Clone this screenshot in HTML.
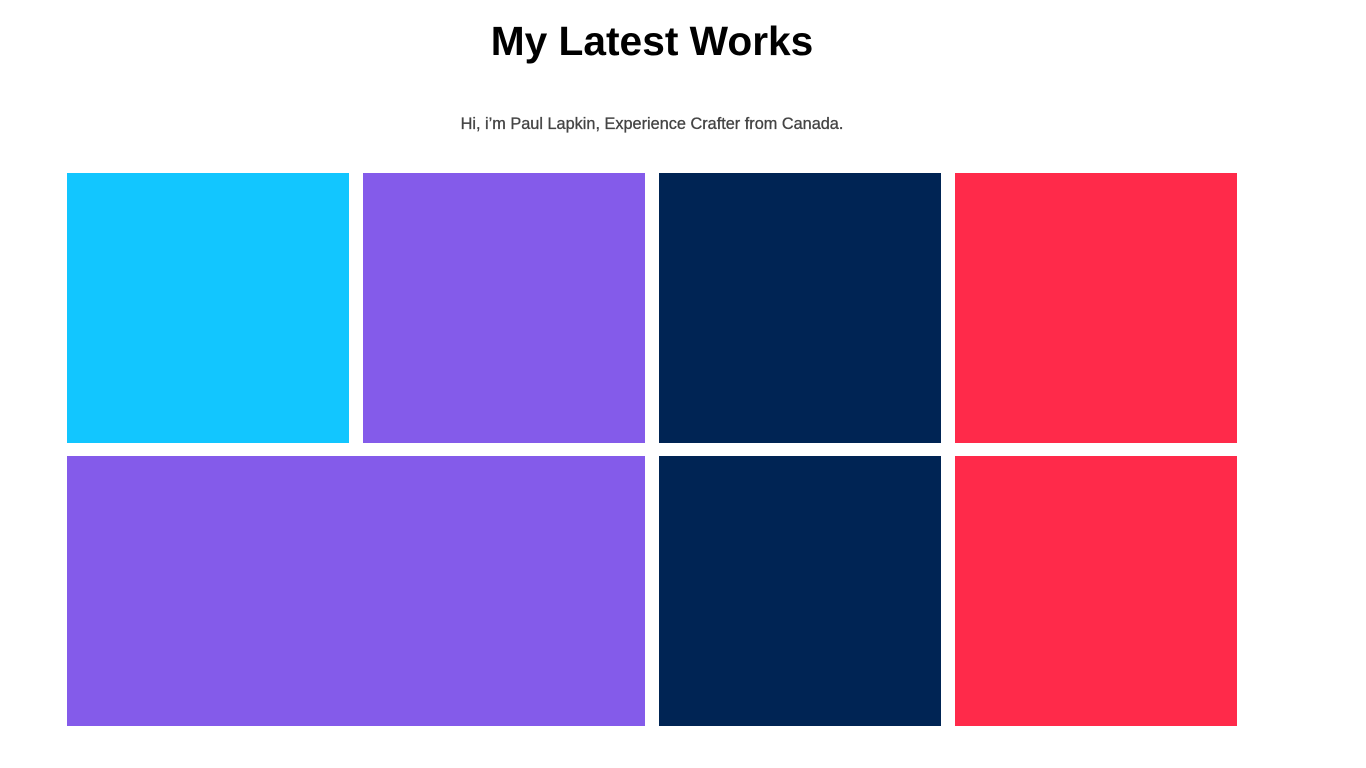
<!DOCTYPE html>
<html><head><meta charset="utf-8"><style>
body{margin:0;background:#fff;width:1366px;height:768px;position:relative;overflow:hidden;font-family:"Liberation Sans",sans-serif}
h1{position:absolute;top:16px;left:0;width:1304px;text-align:center;margin:0;font-size:40.7px;font-weight:bold;color:#000;line-height:50px}
p{position:absolute;top:114px;left:0;width:1304px;text-align:center;margin:0;font-size:16.3px;color:#444;line-height:20px;-webkit-text-stroke:0.3px #444}
.b{position:absolute}
</style></head><body>
<h1>My Latest Works</h1>
<p>Hi, i’m Paul Lapkin, Experience Crafter from Canada.</p>
<div class="b" style="left:67px;top:173px;width:282px;height:270px;background:#12c6ff"></div>
<div class="b" style="left:363px;top:173px;width:282px;height:270px;background:#845bea"></div>
<div class="b" style="left:659px;top:173px;width:282px;height:270px;background:#002454"></div>
<div class="b" style="left:955px;top:173px;width:282px;height:270px;background:#ff2a4a"></div>
<div class="b" style="left:67px;top:456px;width:578px;height:270px;background:#845bea"></div>
<div class="b" style="left:659px;top:456px;width:282px;height:270px;background:#002454"></div>
<div class="b" style="left:955px;top:456px;width:282px;height:270px;background:#ff2a4a"></div>
</body></html>
